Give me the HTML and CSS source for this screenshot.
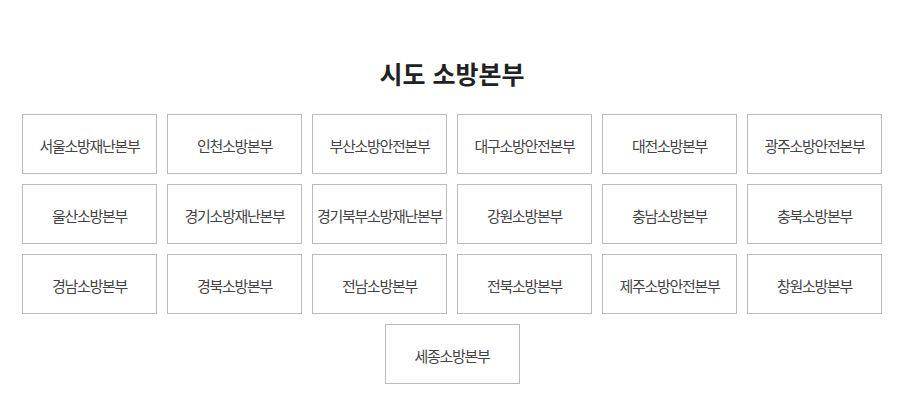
FILE: index.html
```html
<!DOCTYPE html>
<html lang="ko">
<head>
    <meta charset="UTF-8">
    <meta name="viewport" content="width=device-width, initial-scale=1.0">
    <title>시도 소방본부</title>
    <link rel="stylesheet" href="styles.css">
</head>
<body>

    <div class="hq-section">
        <h2 class="hq-title">시도 소방본부</h2>

        <!-- 시도별 소방본부 목록 -->
        <ul class="hq-list">
            <li><a href="#">서울소방재난본부</a></li>
            <li><a href="#">인천소방본부</a></li>
            <li><a href="#">부산소방안전본부</a></li>
            <li><a href="#">대구소방안전본부</a></li>
            <li><a href="#">대전소방본부</a></li>
            <li><a href="#">광주소방안전본부</a></li>
            <li><a href="#">울산소방본부</a></li>
            <li><a href="#">경기소방재난본부</a></li>
            <li><a href="#">경기북부소방재난본부</a></li>
            <li><a href="#">강원소방본부</a></li>
            <li><a href="#">충남소방본부</a></li>
            <li><a href="#">충북소방본부</a></li>
            <li><a href="#">경남소방본부</a></li>
            <li><a href="#">경북소방본부</a></li>
            <li><a href="#">전남소방본부</a></li>
            <li><a href="#">전북소방본부</a></li>
            <li><a href="#">제주소방안전본부</a></li>
            <li><a href="#">창원소방본부</a></li>
            <li><a href="#">세종소방본부</a></li>
        </ul>
    </div>

</body>
</html>
```

FILE: styles.css
```css
body {
    font-family: "Noto Sans CJK KR", "Noto Sans", sans-serif;
    margin: 0;
    padding: 0;
    background-color: #fff;
    color: #444;
}
.hq-section {
    width: 860px;
    padding: 54px 0 0 22px;
}
.hq-title {
    margin: 0 0 22px;
    text-align: center;
    font-size: 25px;
    font-weight: bold;
    line-height: 38px;
    color: #222;
}
.hq-list {
    list-style: none;
    margin: 0;
    padding: 0;
    display: flex;
    flex-wrap: wrap;
    justify-content: center;
    gap: 10px;
}
.hq-list li {
    width: 135px;
}
.hq-list a {
    display: flex;
    align-items: center;
    justify-content: center;
    box-sizing: border-box;
    height: 60px;
    padding-top: 2px;
    border: 1px solid #bbb;
    font-size: 15px;
    letter-spacing: -1.3px;
    color: #444;
    text-decoration: none;
    white-space: nowrap;
}
```
